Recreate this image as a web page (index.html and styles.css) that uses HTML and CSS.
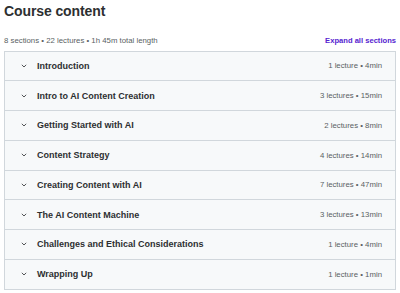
FILE: index.html
```html
<!DOCTYPE html>
<html lang="en">
<head>
    <meta charset="UTF-8">
    <meta name="viewport" content="width=device-width, initial-scale=1.0">
    <title>Course content</title>
    <link rel="stylesheet" href="styles.css">
</head>
<body>
    <div class="curriculum">
        <h2>Course content</h2>

        <div class="meta">
            <span>8 sections • 22 lectures • 1h 45m total length</span>
            <a href="#" class="expand">Expand all sections</a>
        </div>

        <div class="sections">
            <div class="section">
                <svg class="chevron" viewBox="0 0 6 4"><path d="M0.8 0.8 L3 3 L5.2 0.8"/></svg>
                <span class="title">Introduction</span>
                <span class="summary">1 lecture • 4min</span>
            </div>
            <div class="section">
                <svg class="chevron" viewBox="0 0 6 4"><path d="M0.8 0.8 L3 3 L5.2 0.8"/></svg>
                <span class="title">Intro to AI Content Creation</span>
                <span class="summary">3 lectures • 15min</span>
            </div>
            <div class="section">
                <svg class="chevron" viewBox="0 0 6 4"><path d="M0.8 0.8 L3 3 L5.2 0.8"/></svg>
                <span class="title">Getting Started with AI</span>
                <span class="summary">2 lectures • 8min</span>
            </div>
            <div class="section">
                <svg class="chevron" viewBox="0 0 6 4"><path d="M0.8 0.8 L3 3 L5.2 0.8"/></svg>
                <span class="title">Content Strategy</span>
                <span class="summary">4 lectures • 14min</span>
            </div>
            <div class="section">
                <svg class="chevron" viewBox="0 0 6 4"><path d="M0.8 0.8 L3 3 L5.2 0.8"/></svg>
                <span class="title">Creating Content with AI</span>
                <span class="summary">7 lectures • 47min</span>
            </div>
            <div class="section">
                <svg class="chevron" viewBox="0 0 6 4"><path d="M0.8 0.8 L3 3 L5.2 0.8"/></svg>
                <span class="title">The AI Content Machine</span>
                <span class="summary">3 lectures • 13min</span>
            </div>
            <div class="section">
                <svg class="chevron" viewBox="0 0 6 4"><path d="M0.8 0.8 L3 3 L5.2 0.8"/></svg>
                <span class="title">Challenges and Ethical Considerations</span>
                <span class="summary">1 lecture • 4min</span>
            </div>
            <div class="section">
                <svg class="chevron" viewBox="0 0 6 4"><path d="M0.8 0.8 L3 3 L5.2 0.8"/></svg>
                <span class="title">Wrapping Up</span>
                <span class="summary">1 lecture • 1min</span>
            </div>
        </div>
    </div>
</body>
</html>
```

FILE: styles.css
```css
/* Global Styles */
body {
    font-family: 'Liberation Sans', Arial, sans-serif;
    background-color: #ffffff;
    margin: 0;
    padding: 0;
    color: #2d2f31;
}

.curriculum {
    padding: 0 4px;
}

h2 {
    margin: 0;
    padding-top: 1px;
    font-size: 14px;
    line-height: 20px;
    font-weight: bold;
    letter-spacing: -0.1px;
}

.meta {
    display: flex;
    justify-content: space-between;
    align-items: center;
    height: 16px;
    margin-top: 11px;
    margin-bottom: 2.5px;
    font-size: 7.8px;
    color: #5a5f63;
}

.expand {
    color: #5624d0;
    font-weight: bold;
    font-size: 7.6px;
    text-decoration: none;
}

.sections {
    border: 1px solid #d1d7dc;
}

.section {
    display: flex;
    align-items: center;
    height: 28.75px;
    padding: 0 13px 0 16px;
    background-color: #f7f9fa;
    border-bottom: 1px solid #d1d7dc;
}

.section:last-child {
    border-bottom: none;
}

.chevron {
    width: 6px;
    height: 4px;
    margin-right: 10px;
    fill: none;
    stroke: #3e4143;
    stroke-width: 0.9;
}

.title {
    flex: 1;
    font-size: 9px;
    font-weight: bold;
}

.summary {
    font-size: 7.8px;
    color: #5a5f63;
}
```
